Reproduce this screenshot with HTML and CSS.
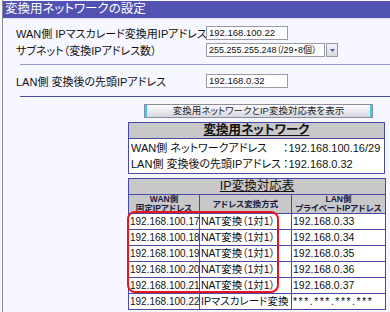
FILE: index.html
```html
<!DOCTYPE html>
<html lang="ja">
<head>
<meta charset="utf-8">
<title>変換用ネットワークの設定</title>
<link rel="stylesheet" href="styles.css">
</head>
<body>
<div class="panel">
  <div class="title">変換用ネットワークの設定</div>
  <div class="form">
    <div class="row">
      <span class="label">WAN側 IPマスカレード変換用IPアドレス</span>
      <span class="input">192.168.100.22</span>
    </div>
    <div class="row">
      <span class="label">サブネット（変換IPアドレス数）</span>
      <span class="select">
        <span class="sel-box">255.255.255.248（/29・8個）</span>
        <span class="sel-btn"><svg width="5" height="3" viewBox="0 0 5 3"><path d="M0 0H5L2.5 3Z" fill="#4a5a8a"/></svg></span>
      </span>
    </div>
  </div>
  <div class="sep light"></div>
  <div class="form lan">
    <div class="row">
      <span class="label">LAN側 変換後の先頭IPアドレス</span>
      <span class="input">192.168.0.32</span>
    </div>
  </div>
  <div class="sep dark"></div>
  <div class="result">
    <div class="btn">変換用ネットワークとIP変換対応表を表示</div>
    <table class="tbl net">
      <tr><th class="cap bold"><u>変換用ネットワーク</u></th></tr>
      <tr><td class="netbody">
        <div class="kv"><span>WAN側 ネットワークアドレス</span><span>：192.168.100.16/29</span></div>
        <div class="kv"><span>LAN側 変換後の先頭IPアドレス</span><span>：192.168.0.32</span></div>
      </td></tr>
    </table>
    <div class="ipwrap">
      <table class="tbl ip">
        <colgroup><col class="c1"><col class="c2"><col class="c3"></colgroup>
        <tr><th class="cap" colspan="3"><u>IP変換対応表</u></th></tr>
        <tr class="colhead"><th>WAN側<br>固定IPアドレス</th><th>アドレス変換方式</th><th>LAN側<br>プライベートIPアドレス</th></tr>
        <tr><td>192.168.100.17</td><td>NAT変換（1対1）</td><td>192.168.0.33</td></tr>
        <tr><td>192.168.100.18</td><td>NAT変換（1対1）</td><td>192.168.0.34</td></tr>
        <tr><td>192.168.100.19</td><td>NAT変換（1対1）</td><td>192.168.0.35</td></tr>
        <tr><td>192.168.100.20</td><td>NAT変換（1対1）</td><td>192.168.0.36</td></tr>
        <tr><td>192.168.100.21</td><td>NAT変換（1対1）</td><td>192.168.0.37</td></tr>
        <tr><td>192.168.100.22</td><td>IPマスカレード変換</td><td class="mask">***.***.***.***</td></tr>
      </table>
      <div class="mark"></div>
    </div>
  </div>
</div>
</body>
</html>
```

FILE: styles.css
```css
html, body {
  margin: 0;
  padding: 0;
  background: #f7f7ff;
}
body {
  font-family: "Liberation Sans", "Noto Sans CJK JP", sans-serif;
  font-size: 11px;
  font-feature-settings: "palt";
  color: #111;
}
.panel {
  margin-left: 2px;
  border-left: 1px solid #8a8a8a;
  min-height: 312px;
  padding-top: 1px;
}
.title {
  height: 17px;
  line-height: 17px;
  background: #5252b2;
  color: #fff;
  font-size: 12.5px;
  padding-left: 2px;
  border-bottom: 1px solid #e0e0f0;
}
.form {
  padding: 6px 0 0 13px;
  display: flex;
  flex-direction: column;
  gap: 3px;
}
.row {
  display: grid;
  grid-template-columns: 190px auto;
  align-items: center;
  height: 14px;
}
.label {
  white-space: nowrap;
  font-size: 11px;
}
.input {
  width: 78px;
  height: 12px;
  line-height: 12px;
  border: 1px solid #9a9aa6;
  background: #fff;
  font-size: 9.5px;
  padding-left: 2px;
}
.select {
  display: flex;
  gap: 1px;
  height: 14px;
}
.sel-box {
  width: 115px;
  height: 12px;
  line-height: 12px;
  border: 1px solid #9a9aa6;
  background: #fff;
  font-size: 9px;
  padding-left: 2px;
  white-space: nowrap;
  overflow: hidden;
}
.sel-btn {
  width: 10px;
  height: 12px;
  border: 1px solid #9a9aa6;
  background: linear-gradient(#f4f4f8, #d8d8e0);
  display: flex;
  align-items: center;
  justify-content: center;
}
.sep {
  margin: 8px 0 0 17px;
  height: 1px;
}
.sep.light { background: #9a9ad0; }
.sep.dark { background: #4a4aa8; margin-top: 9px; }
.lan { padding-top: 8px; }
.result {
  margin-left: 125px;
  padding-top: 7px;
  width: 257px;
  display: flex;
  flex-direction: column;
  align-items: stretch;
}
.btn {
  margin: 0 12px 0 16px;
  height: 12px;
  line-height: 12px;
  border: 1px solid #8c8c9c;
  box-shadow: inset 2px 0 #3cc8f0, inset -2px 0 #3cc8f0;
  background: linear-gradient(#ffffff, #e6e6ec 60%, #d6d6de);
  text-align: center;
  font-size: 9.5px;
  color: #222;
}
.tbl {
  border-collapse: collapse;
  width: 257px;
  table-layout: fixed;
  background: #fff;
  border: 1px solid #4848a8;
}
.tbl th, .tbl td {
  border: 1px solid #4848a8;
  padding: 0;
}
.net { margin-top: 4px; }
.cap {
  background: #c8c8c8;
  height: 15px;
  font-size: 12.5px;
  font-weight: normal;
  color: #111;
  line-height: 15px;
}
.cap.bold { font-weight: bold; }
.netbody {
  padding: 1px 2px 1px 2px !important;
}
.kv {
  display: grid;
  grid-template-columns: 152px auto;
  height: 16px;
  line-height: 16px;
  font-size: 11px;
  white-space: nowrap;
}
.ipwrap {
  position: relative;
  margin-top: 4px;
}
.c1 { width: 71px; }
.c2 { width: 92px; }
.c3 { width: 94px; }
.colhead th {
  background: #c8c8c8;
  font-size: 8.5px;
  font-weight: bold;
  line-height: 9px;
  height: 17px;
  color: #1a1a40;
  white-space: nowrap;
}
.ip td {
  height: 15px;
  line-height: 15px;
  font-size: 10.5px;
  white-space: nowrap;
  padding-left: 1px;
}
.ip td:first-child {
  font-size: 10px;
  padding-left: 1px;
}
.ip td.mask {
  letter-spacing: 1.5px;
}
.mark {
  position: absolute;
  left: -1px;
  top: 33px;
  width: 148px;
  height: 78px;
  border: 2px solid #e8141c;
  border-radius: 8px;
  pointer-events: none;
}
```
